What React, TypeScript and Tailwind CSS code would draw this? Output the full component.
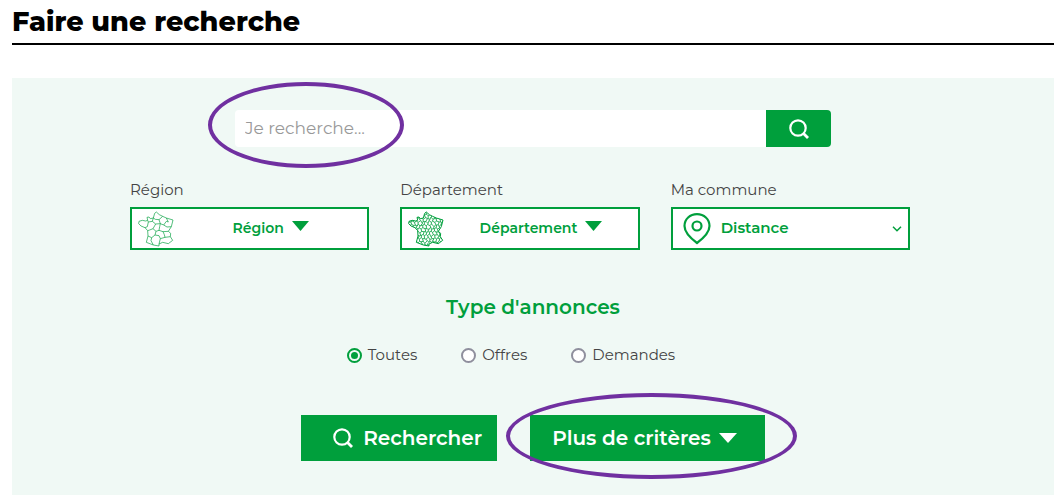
import { useState } from "react";
import type { ReactNode } from "react";

const OUTLINE =
	"M54 2 L63 10 L73 15 L84 20 L104 26 L99 46 L90 60 L97 66 L96 76 L103 87 L90 97 L73 93 L62 98 L62 104 L45 101 L24 93 L29 74 L28 58 L20 49 L8 44 L1 37 L2 30 L12 27 L22 29 L28 27 L26 18 L32 17 L36 22 L45 20 L49 6 Z";

const REGION_BORDERS =
	"M45 20 L51 24 L62 25 L73 15 M62 25 L66 37 L76 41 L84 30 L90 32 L84 20 M45 20 L42 30 L30 32 L28 27 M42 30 L52 38 L66 37 M30 32 L27 46 L20 49 M52 38 L44 52 L34 56 L28 58 M44 52 L53 60 L62 57 L64 46 L66 37 M76 41 L86 47 L99 46 M62 57 L74 61 L90 60 M53 60 L50 71 L40 79 L29 74 M50 71 L62 73 L66 82 L80 78 L96 76 M40 79 L38 88 L45 101 M66 82 L62 98 M74 61 L78 70 L80 78";

// small honeycomb with uneven corners, clipped by the outline of the map
const buildDepartments = () => {
	const jitter = (r: number, c: number) => (((r * r * 5 + c * c * 3 + r * c * 7) % 11) - 5) * 0.55;
	const point = (r: number, c: number) => {
		const x = c * 5 + jitter(r, c);
		const y = r * 10 + ((r + c) % 2 === 0 ? 0 : 4) + jitter(c, r);
		return `${x} ${y}`;
	};
	let path = "";
	for (let r = 0; r < 12; r++) {
		for (let c = 0; c < 23; c++) {
			path += `${c === 0 ? "M" : "L"}${point(r, c)} `;
		}
		for (let c = 0; c < 23; c++) {
			if ((r + c) % 2 === 1) path += `M${point(r, c)} L${point(r + 1, c)} `;
		}
	}
	return path;
};

const DEPARTMENT_BORDERS = buildDepartments();

const RegionMap = () => (
	<svg viewBox="-1 -1 108 108" className="size-9 shrink-0" fill="none" stroke="#009f3c" strokeLinejoin="round" aria-hidden="true">
		<path d={OUTLINE} strokeWidth="2" />
		<path d={REGION_BORDERS} strokeWidth="2" />
	</svg>
);

const DepartmentMap = () => (
	<svg viewBox="-1 -1 108 108" className="size-9 shrink-0" fill="none" stroke="#009f3c" strokeLinejoin="round" aria-hidden="true">
		<clipPath id="france">
			<path d={OUTLINE} />
		</clipPath>
		<path d={OUTLINE} strokeWidth="3" />
		<path d={DEPARTMENT_BORDERS} strokeWidth="2.4" clipPath="url(#france)" />
	</svg>
);

const SearchIcon = () => (
	<svg viewBox="0 0 20 20" className="size-5 shrink-0" fill="none" stroke="currentColor" strokeWidth="2.2" aria-hidden="true">
		<circle cx="9" cy="9" r="7.7" />
		<path d="M14.5 14.5 L19 19" strokeWidth="2.8" />
	</svg>
);

const Caret = ({ className }: { className: string }) => (
	<svg viewBox="0 0 18 10" preserveAspectRatio="none" className={className} fill="currentColor" aria-hidden="true">
		<path d="M0 0 H18 L9 10 Z" />
	</svg>
);

const PinIcon = () => (
	<svg viewBox="0 0 28 32" className="h-8 w-7 shrink-0" fill="none" stroke="currentColor" strokeWidth="2.2" strokeLinejoin="round" aria-hidden="true">
		<path d="M14 30 C10 27 1.5 20.5 1.5 13 C1.5 6 7 1.2 14 1.2 S26.5 6 26.5 13 C26.5 20.5 18 27 14 30 Z" />
		<circle cx="14" cy="13" r="4.5" />
	</svg>
);

type PickerProps = {
	id: string;
	label: string;
	map: ReactNode;
};

const Picker = ({ id, label, map }: PickerProps) => (
	<div>
		<label htmlFor={id} className="block text-[15px] leading-5 text-[#444444]">
			{label}
		</label>
		<button
			id={id}
			type="button"
			className="mt-[7px] flex h-[43px] w-full items-center border-2 border-[#009f3c] bg-white pl-1.5 text-[14px] font-semibold text-[#009f3c]"
		>
			{map}
			<span className="flex flex-1 items-center justify-center gap-2">
				{label}
				<Caret className="mb-1.5 h-2.5 w-[17px]" />
			</span>
		</button>
	</div>
);

const types = ["Toutes", "Offres", "Demandes"];

const App = () => {
	const [query, setQuery] = useState("");
	const [type, setType] = useState("Toutes");

	return (
		<main className="bg-white pr-1.5 pb-2 pl-3 font-['Montserrat','Inter',sans-serif]">
			<h1 className="border-b-2 border-black pt-1 pb-1 text-[27px] leading-[35px] font-extrabold text-black">
				Faire une recherche
			</h1>

			<form className="mt-[33px] bg-[#f0f9f5] pt-8 pb-[34px]" onSubmit={(e) => e.preventDefault()}>
				{/* Search bar */}
				<div className="relative mx-auto flex h-[37px] w-full max-w-[596px]">
					<input
						type="text"
						aria-label="Je recherche"
						placeholder="Je recherche..."
						value={query}
						onChange={(e) => setQuery(e.target.value)}
						className="min-w-0 flex-1 rounded-l bg-white px-2.5 text-[17px] text-[#444444] outline-none placeholder:text-[#999999]"
					/>
					<button
						type="submit"
						aria-label="Lancer la recherche"
						className="flex w-[65px] items-center justify-center rounded-r bg-[#009f3c] text-white"
					>
						<SearchIcon />
					</button>
					<span className="pointer-events-none absolute -top-7 -left-[27px] h-[86px] w-[196px] rounded-[50%] border-4 border-[#7030a0]" />
				</div>

				{/* Location */}
				<div className="mt-[33px] pr-[26px]">
					<div className="mx-auto grid w-full max-w-[780px] grid-cols-3 gap-[31px]">
						<Picker id="region" label="Région" map={<RegionMap />} />
						<Picker id="departement" label="Département" map={<DepartmentMap />} />
						<div>
							<label htmlFor="distance" className="block text-[15px] leading-5 text-[#444444]">
								Ma commune
							</label>
							<div className="relative mt-[7px] flex h-[43px] items-center border-2 border-[#009f3c] bg-white pl-2.5 text-[#009f3c]">
								<PinIcon />
								<select
									id="distance"
									className="h-full min-w-0 flex-1 appearance-none bg-transparent pl-2.5 text-[15px] font-semibold outline-none"
								>
									<option>Distance</option>
								</select>
								<svg viewBox="0 0 10 6" className="pointer-events-none absolute right-1.5 h-1.5 w-2.5" fill="none" stroke="currentColor" strokeWidth="1.5" aria-hidden="true">
									<path d="M1 0.8 L5 4.8 L9 0.8" />
								</svg>
							</div>
						</div>
					</div>
				</div>

				{/* Ad type */}
				<fieldset className="mt-[43px]">
					<legend className="mx-auto text-[20px] leading-7 font-semibold text-[#009f3c]">Type d'annonces</legend>
					<div className="mt-6 flex justify-center">
						{types.map((name) => (
							<label key={name} className="mr-11 flex items-center gap-1.5 text-[15px] leading-5 text-[#444444]">
								<input
									type="radio"
									name="type"
									checked={type === name}
									onChange={() => setType(name)}
									className="size-[15px] appearance-none rounded-full border-2 border-[#8f8f9d] bg-white checked:border-[#009f3c] checked:bg-[#009f3c] checked:bg-clip-content checked:p-[2px]"
								/>
								{name}
							</label>
						))}
					</div>
				</fieldset>

				{/* Actions */}
				<div className="mt-[50px] flex justify-center gap-[33px] text-[20px] font-semibold text-white">
					<button type="submit" className="flex h-[46px] items-center gap-2.5 bg-[#009f3c] pr-[15px] pl-8">
						<SearchIcon />
						Rechercher
					</button>
					<div className="relative">
						<button type="button" className="flex h-[46px] items-center gap-2 bg-[#009f3c] pr-7 pl-[22px]">
							Plus de critères
							<Caret className="h-2.5 w-[18px]" />
						</button>
						<span className="pointer-events-none absolute -top-[22px] -left-6 h-[86px] w-[291px] rounded-[50%] border-4 border-[#7030a0]" />
					</div>
				</div>
			</form>
		</main>
	);
};

export default App;
